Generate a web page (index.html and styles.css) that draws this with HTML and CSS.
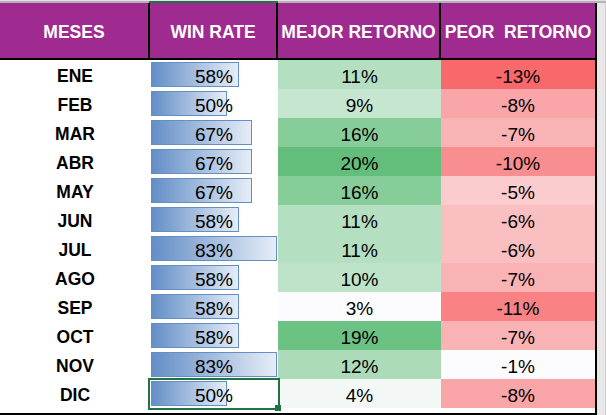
FILE: index.html
```html
<!DOCTYPE html>
<html lang="es">
<head>
<meta charset="utf-8">
<title>Win rate por mes</title>
<link rel="stylesheet" href="styles.css">
</head>
<body>
<div class="sheet">
  <div class="colbar"><div class="colsel"></div></div>
  <div class="main">
    <div class="table">
      <div class="head">
        <div class="hc">MESES</div>
        <div class="hc">WIN RATE</div>
        <div class="hc">MEJOR RETORNO</div>
        <div class="hc last">PEOR  RETORNO</div>
      </div>
      <div class="body">
        <div class="m">ENE</div><div class="wr"><div class="bar" style="width:88px"></div><span class="v">58%</span></div><div class="g" style="background:#B4DFC1">11%</div><div class="r" style="background:#F8696B">-13%</div>
        <div class="m">FEB</div><div class="wr"><div class="bar" style="width:76px"></div><span class="v">50%</span></div><div class="g" style="background:#C6E6D0">9%</div><div class="r" style="background:#FAA6A9">-8%</div>
        <div class="m">MAR</div><div class="wr"><div class="bar" style="width:101px"></div><span class="v">67%</span></div><div class="g" style="background:#87CD9A">16%</div><div class="r" style="background:#FAB3B5">-7%</div>
        <div class="m">ABR</div><div class="wr"><div class="bar" style="width:101px"></div><span class="v">67%</span></div><div class="g" style="background:#63BE7B">20%</div><div class="r" style="background:#F98E90">-10%</div>
        <div class="m">MAY</div><div class="wr"><div class="bar" style="width:101px"></div><span class="v">67%</span></div><div class="g" style="background:#87CD9A">16%</div><div class="r" style="background:#FBCBCE">-5%</div>
        <div class="m">JUN</div><div class="wr"><div class="bar" style="width:88px"></div><span class="v">58%</span></div><div class="g" style="background:#B4DFC1">11%</div><div class="r" style="background:#FABFC1">-6%</div>
        <div class="m">JUL</div><div class="wr"><div class="bar" style="width:126px"></div><span class="v">83%</span></div><div class="g" style="background:#B4DFC1">11%</div><div class="r" style="background:#FABFC1">-6%</div>
        <div class="m">AGO</div><div class="wr"><div class="bar" style="width:88px"></div><span class="v">58%</span></div><div class="g" style="background:#BDE3C9">10%</div><div class="r" style="background:#FAB3B5">-7%</div>
        <div class="m">SEP</div><div class="wr"><div class="bar" style="width:88px"></div><span class="v">58%</span></div><div class="g" style="background:#FCFCFF">3%</div><div class="r" style="background:#F98284">-11%</div>
        <div class="m">OCT</div><div class="wr"><div class="bar" style="width:88px"></div><span class="v">58%</span></div><div class="g" style="background:#6CC283">19%</div><div class="r" style="background:#FAB3B5">-7%</div>
        <div class="m">NOV</div><div class="wr"><div class="bar" style="width:126px"></div><span class="v">83%</span></div><div class="g" style="background:#ABDBB9">12%</div><div class="r" style="background:#FCFCFF">-1%</div>
        <div class="m">DIC</div><div class="wr selected"><div class="bar" style="width:76px"></div><span class="v">50%</span><div class="sel"><div class="handle"></div></div></div><div class="g" style="background:#F3F8F7">4%</div><div class="r" style="background:#FAA6A9">-8%</div>
      </div>
    </div>
    <div class="gutter"></div>
  </div>
</div>
</body>
</html>
```

FILE: styles.css
```css
html, body {
  margin: 0;
  padding: 0;
  background: #E6E6E6;
}
.sheet {
  width: 606px;
  height: 415px;
  overflow: hidden;
  background: #E6E6E6;
  font-family: "Liberation Sans", Arial, sans-serif;
  color: #000;
}
.colbar {
  height: 3px;
  box-sizing: border-box;
  background: #E2E2E2;
  border-bottom: 2px solid #B4B4B4;
  position: relative;
}
.colsel {
  position: absolute;
  left: 149px;
  width: 129px;
  top: 1px;
  height: 2px;
  background: #217346;
}
.main {
  display: flex;
}
.table {
  width: 597px;
  box-sizing: border-box;
  border-right: 2px solid #000;
  border-bottom: 2px solid #000;
  background: #fff;
}
.head {
  display: grid;
  grid-template-columns: 150px 128px 163px 154px;
  height: 57px;
  box-sizing: border-box;
  border-bottom: 2px solid #000;
  background: #A02B90;
}
.hc {
  box-sizing: border-box;
  border-right: 2px solid #000;
  display: flex;
  align-items: center;
  justify-content: center;
  padding-top: 3px;
  color: #fff;
  font-weight: bold;
  font-size: 17.5px;
  white-space: pre;
}
.hc.last {
  border-right: none;
}
.body {
  display: grid;
  grid-template-columns: 150px 128px 163px 154px;
  grid-auto-rows: 29px;
}
.m, .g, .r, .v {
  line-height: 33px;
  text-align: center;
  white-space: nowrap;
}
.m {
  font-weight: bold;
  font-size: 17.5px;
}
.g, .r, .v {
  font-size: 19px;
}
.wr {
  display: grid;
  position: relative;
}
.bar, .v {
  grid-area: 1 / 1;
}
.bar {
  justify-self: start;
  align-self: start;
  margin: 2px 0 0 1px;
  height: 25px;
  box-sizing: border-box;
  border: 1px solid #638EC6;
  background: linear-gradient(to right, #638EC6, #E6EDF7);
}
.v {
  justify-self: center;
  position: relative;
}
.sel {
  position: absolute;
  top: -1px;
  left: -2px;
  right: -2px;
  bottom: -2px;
  border: 2px solid #217346;
}
.handle {
  position: absolute;
  right: -3px;
  bottom: -3px;
  width: 6px;
  height: 6px;
  background: #217346;
}
.gutter {
  flex: 1;
  height: 412px;
  background: #E8E8E8;
  border-right: 1px solid #D0D0D0;
}
```
